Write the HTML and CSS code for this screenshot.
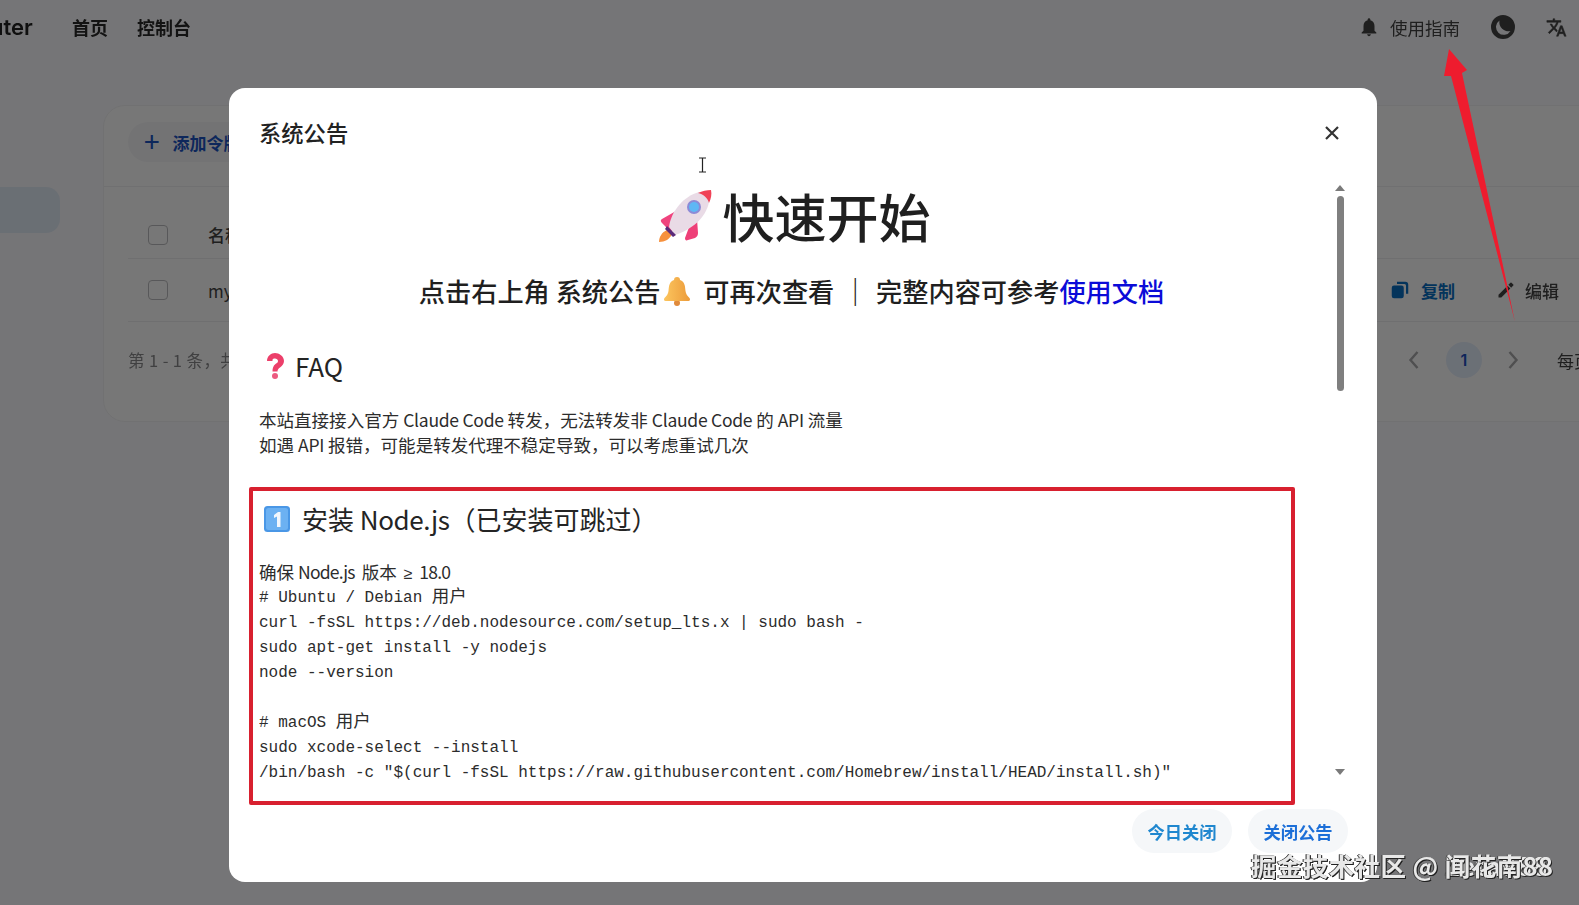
FILE: index.html
```html
<!DOCTYPE html>
<html lang="zh-CN">
<head>
<meta charset="utf-8">
<title>系统公告</title>
<link rel="stylesheet" href="styles.css">
</head>
<body>
<div class="page">
  <header class="topbar">
    <div class="brand">uter</div>
    <nav class="nav"><a>首页</a><a>控制台</a></nav>
    <div class="top-actions">
      <svg class="ic-bell" viewBox="0 0 24 24"><path d="M12 22c1.1 0 2-.9 2-2h-4c0 1.1.9 2 2 2zm6-6v-5c0-3.07-1.63-5.64-4.5-6.32V4c0-.83-.67-1.5-1.5-1.5s-1.5.67-1.5 1.5v.68C7.64 5.36 6 7.92 6 11v5l-2 2v1h16v-1l-2-2z"/></svg>
      <span class="guide">使用指南</span>
      <svg class="ic-moon" viewBox="0 0 24 24"><path fill-rule="evenodd" d="M12 0a12 12 0 1 1 0 24 12 12 0 0 1 0-24zM8.500 5.500A7.800 7.800 0 1 0 19.500 16 A9 9 0 0 1 8.500 5.500z"/></svg>
      <svg class="ic-lang" viewBox="0 0 24 24"><path d="M12.870 15.070l-2.540-2.510.03-.03c1.740-1.940 2.980-4.170 3.710-6.530H17V4h-7V2H8v2H1v1.990h11.170C11.500 7.920 10.440 9.750 9 11.350 8.070 10.320 7.300 9.190 6.690 8h-2c.73 1.630 1.730 3.170 2.980 4.560l-5.090 5.020L4 19l5-5 3.110 3.110.76-2.040zM18.500 10h-2L12 22h2l1.120-3h4.750L21 22h2l-4.500-12zm-2.620 7l1.620-4.330L19.120 17h-3.240z"/></svg>
    </div>
  </header>
  <main class="main">
    <aside class="side"><div class="side-item"></div></aside>
    <section class="card">
      <div class="toolbar"><button class="add"><span class="plus">+</span>添加令牌</button></div>
      <div class="row row-head">
        <span class="check"></span><span class="cell">名称</span>
      </div>
      <div class="row row-body">
        <span class="check"></span><span class="cell">my-token</span>
        <div class="ops">
          <span class="op op-copy"><svg viewBox="0 0 24 24"><rect x="1" y="6" width="16" height="17" rx="3"/><path d="M8 1h11a4 4 0 0 1 4 4v12h-3V6a2 2 0 0 0-2-2H8z"/></svg>复制</span>
          <span class="op"><svg viewBox="0 0 24 24"><path d="M2 18.250V22h3.750L17.810 9.940l-3.750-3.750L2 18.250zM21.710 6.040a1 1 0 0 0 0-1.410l-2.340-2.340a1 1 0 0 0-1.410 0l-2.830 2.830 3.750 3.750 2.830-2.830z"/></svg>编辑</span>
        </div>
      </div>
      <div class="pager">
        <span class="total">第 1 - 1 条，共 1 条</span>
        <div class="pages">
          <svg class="chev" viewBox="0 0 12 20"><path d="M10 2 3 10l7 8"/></svg>
          <span class="num">1</span>
          <svg class="chev" viewBox="0 0 12 20"><path d="M2 2l7 8-7 8"/></svg>
          <span class="size">每页</span>
        </div>
      </div>
    </section>
  </main>
</div>

<div class="overlay"></div>

<div class="modal">
  <div class="modal-head">
    <h2 class="modal-title">系统公告</h2>
    <svg class="close" viewBox="0 0 14 14"><path d="M1 1l12 12M13 1 1 13"/></svg>
  </div>
  <div class="modal-body">
    <div class="content">
      <h1 class="h1">
        <svg class="rocket" viewBox="0 0 54 54">
          <path d="M9 41c-5 2-8 7-8 12 6 0 11-3 13-8z" fill="#f7913d"/>
          <path d="M18 22 4 30c-2 1-1 3 0 4l9 9 10-10z" fill="#f0437e"/>
          <path d="M33 33 27 49c0 2 1 3 3 2l7-2c2-1 3-3 3-5l-1-14z" fill="#ee3f78"/>
          <path d="M11 38C13 22 26 7 41 3c5 1 9 5 10 10C48 29 33 41 17 46z" fill="#e9dbe6"/>
          <path d="M40 4c4-2 9-3 13-3 1 4 0 9-2 13-1-5-6-9-11-10z" fill="#f04257"/>
          <circle cx="36" cy="18" r="7" fill="#8d8ad6"/>
          <circle cx="36" cy="18" r="5" fill="#5eb7f5"/>
          <path d="M9 37l9 9-3 2-8-8z" fill="#5a2a7a"/>
        </svg>快速开始
      </h1>
      <h3 class="sub">点击右上角 系统公告<svg class="bell" viewBox="0 0 28 30">
          <defs><linearGradient id="bellg" x1="0" y1="0" x2="1" y2="0"><stop offset="0" stop-color="#fcc55e"/><stop offset="1" stop-color="#ec9b3a"/></linearGradient></defs>
          <circle cx="14" cy="27" r="3" fill="#e08a3c"/>
          <path d="M14 1c-2 0-3 1-3 3C6 6 6 10 5.500 15c-.3 3-2 5-4 7-1 1-.5 3 1 3h23c1.500 0 2-2 1-3-2-2-3.700-4-4-7C22 10 22 6 17 4c0-2-1-3-3-3z" fill="url(#bellg)"/>
        </svg> 可再次查看 <span class="bar">｜</span> 完整内容可参考<a class="doc">使用文档</a></h3>
      <h2 class="h2 faq"><svg class="qm" viewBox="0 0 20 28">
          <path d="M2 9c0-5 4-8 8-8s9 3 9 8c0 3-2 5-4 6.500-1.500 1-2.500 2-2.500 4H7.500c0-3 .5-5.500 3-7.500 1.500-1 2.500-1.500 2.500-3s-1.500-2.500-3-2.500S7 7 7.500 9z" fill="#ec3f6a"/>
          <circle cx="10" cy="24" r="3" fill="#ec5a80"/>
        </svg>FAQ</h2>
      <p class="para">本站直接接入官方 <span class="lat">Claude Code</span> 转发，无法转发非 <span class="lat">Claude Code</span> 的 <span class="lat">API</span> 流量<br>如遇 <span class="lat">API</span> 报错，可能是转发代理不稳定导致，可以考虑重试几次</p>
      <h2 class="h2 install"><svg class="key" viewBox="0 0 26 26">
          <rect width="26" height="26" rx="3.500" fill="#4a97e6"/>
          <rect x="2" y="2" width="22" height="22" rx="2.500" fill="#6cb1f2"/>
          <path d="M10 9l4-3h2.500v15h-3.500V10.500l-3 1.500z" fill="#f2f7fd"/>
        </svg>安装 <span class="lat-big">Node.js</span>（已安装可跳过）</h2>
      <p class="para para-tight">确保 <span class="lat-tight node">Node.js</span> <span class="ver">版本 <span class="gte">≥</span> <span class="lat-tight">18.0</span></span></p>
      <pre class="code"># Ubuntu / Debian <span class="code-cjk">用户</span>
curl -fsSL https://deb.nodesource.com/setup_lts.x | sudo bash -
sudo apt-get install -y nodejs
node --version

# macOS <span class="code-cjk">用户</span>
sudo xcode-select --install
/bin/bash -c "$(curl -fsSL https://raw.githubusercontent.com/Homebrew/install/HEAD/install.sh)"</pre>
    </div>
    <div class="scrollbar">
      <span class="arrow arrow-up"></span>
      <span class="thumb"></span>
      <span class="arrow arrow-down"></span>
    </div>
  </div>
  <div class="modal-foot">
    <button class="pill pill-today">今日关闭</button>
    <button class="pill pill-close">关闭公告</button>
  </div>
</div>

<div class="redbox"></div>
<svg class="red-arrow" viewBox="0 0 100 290"><path d="M13 1 31 22 26 25 79 274 15 28 8 28z" fill="#ee1c2e"/></svg>
<svg class="cursor" viewBox="0 0 9 16"><path d="M1 1h7M1 15h7M4.500 1v14" fill="none" stroke="#222" stroke-width="1.200"/></svg>
<div class="watermark"><span>掘金技术社区 @ Zeta988</span><span>掘金技术社区 @ 闻花南88</span></div>
</body>
</html>
```

FILE: styles.css
```css
* { box-sizing: border-box; }
html, body { margin: 0; height: 100%; }
body {
  width: 1579px;
  height: 905px;
  overflow: hidden;
  position: relative;
  background: #fbfbfe;
  font-family: "Noto Sans CJK SC", "Noto Sans", sans-serif;
  color: #222;
}
svg { display: block; }

/* background page */
.page { height: 905px; filter: blur(0.6px); }
.topbar { height: 54px; display: flex; align-items: center; }
.brand { font: 600 22px "Inter", "Noto Sans", sans-serif; margin-left: -10px; width: 82px; color: #222; }
.nav { display: flex; gap: 29px; font-size: 18px; font-weight: 700; color: #2a2a2a; }
.top-actions { margin-left: auto; display: flex; align-items: center; color: #333; padding-right: 12px; }
.ic-bell { width: 22px; height: 22px; fill: #444; margin-right: 10px; }
.guide { font-size: 17.500px; color: #444; margin-right: 31px; }
.ic-moon { width: 24px; height: 24px; fill: #444; margin-right: 31px; }
.ic-lang { width: 21px; height: 21px; fill: #444; stroke: #444; stroke-width: .6px; }

.main { display: flex; margin-top: 2px; }
.side { width: 103px; flex: none; padding-top: 131px; }
.side-item { width: 60px; height: 46px; background: #e4edf9; border-radius: 0 14px 14px 0; }
.card {
  margin-top: 49px;
  width: 1520px;
  flex: none;
  height: 317px;
  background: #fff;
  border-radius: 22px;
  border: 1px solid #f2f2f4;
  padding: 0 0 0 24px;
}
.toolbar { height: 81px; padding-top: 16px; border-bottom: 1px solid #f0f0f2; margin-left: -24px; padding-left: 24px; }
.add { display: flex; align-items: center; height: 40px; border: 0; background: #f7f7f9; border-radius: 20px; padding: 0 16px; font: 700 17px "Noto Sans CJK SC", sans-serif; color: #1d55c4; }
.plus { font-size: 28px; font-weight: 400; margin-right: 13px; line-height: 1; position: relative; top: -2px; }
.row { display: flex; align-items: center; border-bottom: 1px solid #eeeef0; padding-left: 20px; }
.row-head { height: 72px; padding-top: 24px; }
.row-body { height: 63px; padding-right: 63px; }
.check { width: 20px; height: 20px; border: 1.500px solid #bdbdc0; border-radius: 4px; background: #fff; margin-right: 40px; flex: none; }
.cell { font-size: 17px; color: #444; white-space: nowrap; }
.row-head .cell { font-weight: 500; }
.ops { margin-left: auto; display: flex; gap: 42px; font-size: 17px; font-weight: 500; flex: none; }
.op { display: flex; align-items: center; gap: 10px; white-space: nowrap; color: #444; }
.op svg { width: 18px; height: 18px; fill: currentColor; }
.op-copy { color: #0a6fc4; font-weight: 600; gap: 12px; }
.pager { display: flex; align-items: center; height: 76px; }
.total { font-size: 16.500px; color: #8a8a8c; letter-spacing: .4px; }
.pages { margin-left: auto; display: flex; align-items: center; width: 248px; flex: none; margin-right: -33px; }
.chev { width: 13px; height: 20px; fill: none; stroke: #a9a9ab; stroke-width: 2.400px; flex: none; }
.num { width: 36px; height: 36px; margin: 0 25px 0 26px; border-radius: 50%; background: #e6effc; color: #1d4fc2; font: 600 16px/36px "Inter", sans-serif; text-align: center; flex: none; }
.size { margin-left: 37px; font-size: 17px; white-space: nowrap; color: #444; }

.overlay { position: absolute; inset: 0; background: rgba(0, 0, 0, .535); }

/* modal */
.modal {
  position: absolute;
  left: 229px;
  top: 88px;
  width: 1148px;
  height: 794px;
  background: #fff;
  border-radius: 16px;
  display: flex;
  flex-direction: column;
  padding: 0 0 0 30px;
}
.modal-head { display: flex; align-items: center; justify-content: space-between; height: 90px; padding: 0 38px 0 0; flex: none; }
.modal-title { margin: -2px 0 0; font-size: 22.300px; line-height: 32px; font-weight: 500; color: #222; }
.close { width: 14px; height: 14px; fill: none; stroke: #333; stroke-width: 2.200px; }
.modal-body { height: 634px; display: flex; flex: none; }
.content { width: 1075px; flex: none; overflow: hidden; color: #242424; }
.h1 { margin: 6px 0 0; padding-right: 4px; display: flex; justify-content: center; align-items: center; font-size: 52px; line-height: 64px; font-weight: 500; color: #1f1f1f; }
.rocket { width: 54px; height: 54px; margin-right: 10px; }
.sub { margin: 25px 0 0; padding-right: 10px; display: flex; justify-content: center; align-items: center; white-space: pre; font-size: 26.200px; line-height: 36px; font-weight: 500; color: #1f1f1f; }
.bell { width: 28px; height: 30px; margin: 0 6px 0 3px; }
.bar { font-size: 28px; margin: 0 1px; color: #1f1f1f; }
.doc { color: #0b0bd8; }
.h2 { margin: 0; display: flex; align-items: center; white-space: pre; font-size: 26px; line-height: 36px; font-weight: 400; color: #242424; }
.faq { margin-top: 39px; padding-left: 6px; }
.qm { width: 20px; height: 28px; margin-right: 10px; }
.install { margin-top: 44px; padding-left: 5px; }
.key { width: 26px; height: 26px; margin-right: 12px; }
.para { margin: 23px 0 0; font-size: 17.550px; line-height: 25px; font-weight: 400; color: #2c2c2c; }
.install + .para { margin-top: 22px; }
.lat { letter-spacing: -.28px; }
.lat-big { letter-spacing: -.4px; }
.lat-tight { letter-spacing: -.8px; }
.node { margin-right: 3px; }
.ver { word-spacing: 3px; }
.gte { font-family: "Liberation Sans", sans-serif; font-size: 16px; line-height: 1; }
.code { margin: 2px 0 0; font: 16px/25px "Liberation Mono", "Noto Sans CJK SC", monospace; color: #2c2c2c; }
.code-cjk { font-size: 17.500px; line-height: 1; }
.scrollbar { width: 20px; display: flex; flex-direction: column; align-items: center; padding-top: 7px; position: relative; left: -4px; }
.arrow { width: 0; height: 0; border-left: 5px solid transparent; border-right: 5px solid transparent; flex: none; }
.arrow-up { border-bottom: 6px solid #7a7a7a; }
.arrow-down { border-top: 6px solid #7a7a7a; margin-top: 378px; }
.thumb { width: 7px; height: 195px; margin-top: 5px; border-radius: 4px; background: #7f7f7f; flex: none; }

.modal-foot { display: flex; justify-content: flex-end; gap: 16px; padding: 0 29px 0 0; margin-top: -3px; }
.pill { width: 100px; height: 44px; border: 0; border-radius: 22px; background: #f5f7f9; font: 700 17.300px "Noto Sans CJK SC", sans-serif; }
.pill-today { color: #1f87cf; }
.pill-close { color: #1c6fd8; }

/* annotations on the screenshot */
.redbox { position: absolute; left: 249px; top: 487px; width: 1046px; height: 318px; border: 4px solid #d8202f; border-radius: 2px; }
.red-arrow { position: absolute; left: 1436px; top: 48px; width: 100px; height: 290px; }
.cursor { position: absolute; left: 698px; top: 157px; width: 9px; height: 16px; }
.watermark { position: absolute; left: 1251px; top: 847px; display: grid; font: 700 25.500px/36px "Noto Sans CJK SC", sans-serif; letter-spacing: .4px; color: #e8e8e8; text-shadow: 1px 1px 0 #222, -1px 0 0 #444; white-space: nowrap; }
.watermark span { grid-area: 1 / 1; }
```
